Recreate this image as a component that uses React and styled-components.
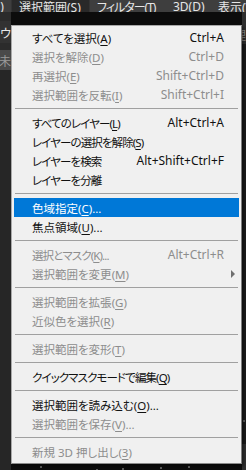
import React from 'react'
import styled, { createGlobalStyle } from 'styled-components'

const GlobalStyle = createGlobalStyle`
    html, body {
        margin: 0;
        padding: 0;
        background: #0c0c0c;
        overflow: hidden;
    }
    body {
        font-family: "Noto Sans", "Noto Sans CJK JP", sans-serif;
        font-feature-settings: "palt";
    }
`

const Screen = styled.div`
    position: relative;
    width: 246px;
    height: 470px;
    display: flex;
    flex-direction: column;
    background: #0c0c0c;
    overflow: hidden;
`

const MenuBar = styled.div`
    height: 25px;
    display: flex;
    align-items: center;
    background: #3e3e3e;
    white-space: nowrap;
    font-size: 12px;
    color: #e6e6e6;
    font-family: "Noto Sans", "Noto Sans CJK JP", sans-serif;
    overflow: hidden;
`

const BarItem = styled.div`
    height: 25px;
    width: ${p => p.$w}px;
    box-sizing: border-box;
    display: flex;
    align-items: center;
    justify-content: ${p => p.$end ? 'flex-end' : 'flex-start'};
    padding: 0 0 0 ${p => p.$pad || 0}px;
    letter-spacing: ${p => p.$tight ? '-1px' : 'normal'};
    background: ${p => p.$active ? '#292929' : 'transparent'};
    border: 1px solid ${p => p.$active ? '#343434' : 'transparent'};
    border-bottom: none;
    flex-shrink: 0;
`

const Workspace = styled.div`
    flex: 1;
    display: flex;
`

const LeftStrip = styled.div`
    width: 11px;
    display: flex;
    flex-direction: column;
    background: #2b2b2b;
    overflow: hidden;
    color: #e8e8e8;
    font-size: 12px;
    white-space: nowrap;
`

const StripRow = styled.div`
    height: ${p => p.$h}px;
    background: ${p => p.$bg};
    color: ${p => p.$fg || '#e8e8e8'};
    display: flex;
    align-items: center;
    justify-content: flex-end;
    font-family: "Noto Sans CJK JP", sans-serif;
`

const Canvas = styled.div`
    flex: 1;
    background: #0c0c0c;
`

const RightStrip = styled.div`
    width: 4px;
    display: flex;
    flex-direction: column;
    background: #2e2e2e;
    overflow: hidden;
    font-size: 12px;
    white-space: nowrap;
`

const Dot = styled.span`
    position: absolute;
    width: 2px;
    height: 2px;
    background: #5a5a5a;
`

const Menu = styled.div`
    position: absolute;
    left: 11px;
    top: 25px;
    width: 231px;
    box-sizing: border-box;
    padding: 2px;
    background: #f0f0f0;
    border: 1px solid #a9a9a9;
    border-right-color: #7e7e7e;
    border-bottom-color: #8a8a8a;
    box-shadow: 2px 2px 2px rgba(0, 0, 0, 0.35);
    font-family: "Noto Sans", "Noto Sans CJK JP", sans-serif;
    font-size: 11.5px;
`

const Row = styled.div`
    height: 19px;
    display: flex;
    align-items: center;
    padding: 0 15px 0 18px;
    white-space: nowrap;
    background: ${p => p.$hot ? '#0078d7' : 'transparent'};
    color: ${p => p.$hot ? '#ffffff' : p.$off ? '#8d8d8d' : '#111111'};
    position: relative;
`

const Label = styled.span`
    flex: 1;
    letter-spacing: ${p => p.$tight ? '-0.9px' : 'normal'};
`

const Key = styled.span`
    font-size: 12px;
`

const Mn = styled.span`
    text-decoration: underline;
    text-underline-offset: 2px;
`

const Arrow = styled.span`
    position: absolute;
    right: 4px;
    top: 6px;
    width: 0;
    height: 0;
    border-left: 4px solid #6f6f6f;
    border-top: 4px solid transparent;
    border-bottom: 4px solid transparent;
`

const Sep = styled.div`
    height: 1px;
    margin: 4px 1px;
    background: #a0a0a0;
`

const items = [
    { t: 'すべてを選択', m: 'A', k: 'Ctrl+A' },
    { t: '選択を解除', m: 'D', k: 'Ctrl+D', off: true },
    { t: '再選択', m: 'E', k: 'Shift+Ctrl+D', off: true },
    { t: '選択範囲を反転', m: 'I', k: 'Shift+Ctrl+I', off: true },
    'sep',
    { t: 'すべてのレイヤー', m: 'L', k: 'Alt+Ctrl+A', tight: true },
    { t: 'レイヤーの選択を解除', m: 'S', tight: true },
    { t: 'レイヤーを検索', k: 'Alt+Shift+Ctrl+F', tight: true },
    { t: 'レイヤーを分離', tight: true },
    'sep',
    { t: '色域指定', m: 'C', dots: true, hot: true },
    { t: '焦点領域', m: 'U', dots: true },
    'sep',
    { t: '選択とマスク', m: 'K', dots: true, k: 'Alt+Ctrl+R', off: true, tight: true },
    { t: '選択範囲を変更', m: 'M', sub: true, off: true },
    'sep',
    { t: '選択範囲を拡張', m: 'G', off: true },
    { t: '近似色を選択', m: 'R', off: true },
    'sep',
    { t: '選択範囲を変形', m: 'T', off: true },
    'sep',
    { t: 'クイックマスクモードで編集', m: 'Q', tight: true },
    'sep',
    { t: '選択範囲を読み込む', m: 'O', dots: true },
    { t: '選択範囲を保存', m: 'V', dots: true, off: true },
    'sep',
    { t: '新規 3D 押し出し', m: '3', off: true },
]

const dots = [
    [40, 466], [122, 468], [188, 466], [232, 440], [243, 420], [96, 469], [160, 467]
]

const App = () => {
    return (
        <>
            <GlobalStyle />
            <Screen>
                <MenuBar>
                    <BarItem $w={11} $end>)&nbsp;&nbsp;</BarItem>
                    <BarItem $active $w={79} $pad={7}>選択範囲(S)</BarItem>
                    <BarItem $w={75} $pad={6} $tight>フィルター(T)</BarItem>
                    <BarItem $w={45} $pad={7}>3D(D)</BarItem>
                    <BarItem $w={60} $pad={7}>表示(V)</BarItem>
                </MenuBar>
                <Workspace>
                    <LeftStrip>
                        <StripRow $h={9} $bg="#2b2b2b" />
                        <StripRow $h={22} $bg="#323232">ドウ</StripRow>
                        <StripRow $h={7} $bg="#2b2b2b" />
                        <StripRow $h={20} $bg="#4a4a4a" $fg="#9a9a9a">未</StripRow>
                        <StripRow $h={400} $bg="#262626" />
                    </LeftStrip>
                    <Canvas />
                    <RightStrip>
                        <StripRow $h={12} $bg="#2e2e2e" />
                        <StripRow $h={20} $bg="#2e2e2e" $fg="#8a8a8a">理</StripRow>
                        <StripRow $h={400} $bg="#1a1a1a" />
                    </RightStrip>
                </Workspace>
                {dots.map(([x, y], i) => (
                    <Dot key={i} style={{ left: x, top: y }} />
                ))}
                <Menu>
                    {items.map((it, i) => it === 'sep' ? (
                        <Sep key={i} />
                    ) : (
                        <Row key={i} $hot={it.hot} $off={it.off}>
                            <Label $tight={it.tight}>
                                {it.t}
                                {it.m && <>(<Mn>{it.m}</Mn>)</>}
                                {it.dots && '...'}
                            </Label>
                            {it.k && <Key>{it.k}</Key>}
                            {it.sub && <Arrow />}
                        </Row>
                    ))}
                </Menu>
            </Screen>
        </>
    )
}

export default App
